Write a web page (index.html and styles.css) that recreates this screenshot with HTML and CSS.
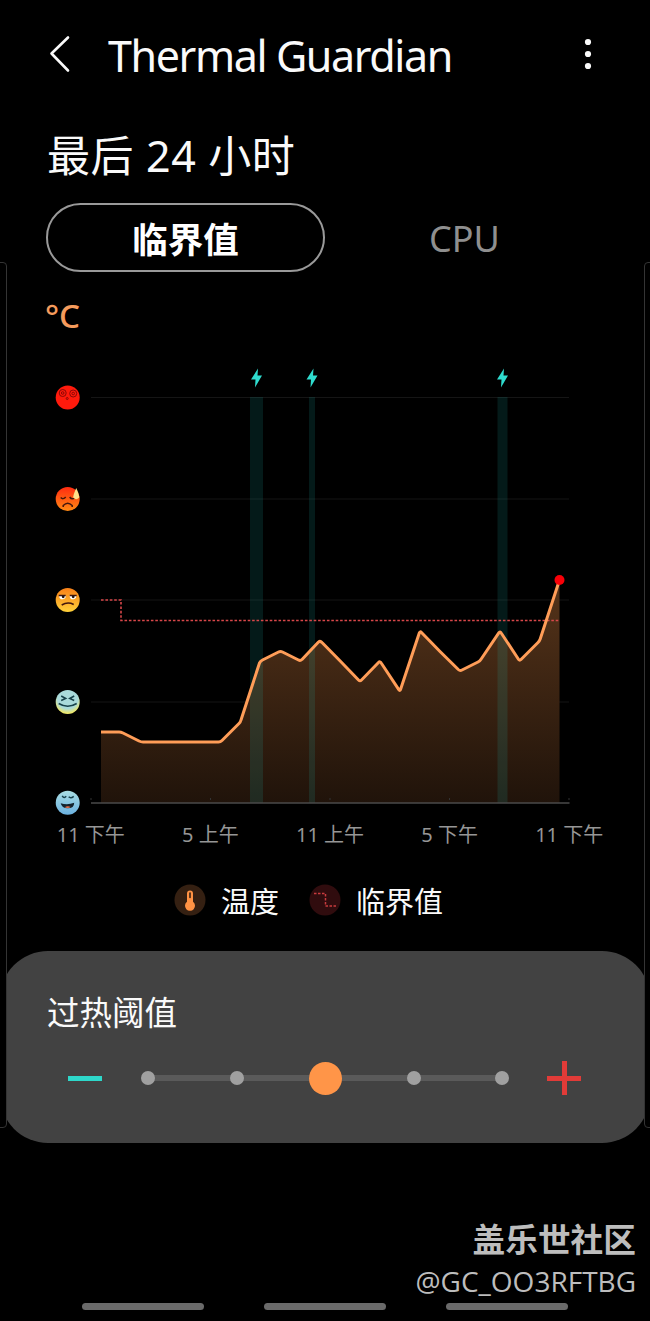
FILE: index.html
```
<!DOCTYPE html>
<html lang="zh-CN">
<head>
  <meta charset="UTF-8">
  <meta name="viewport" content="width=device-width, initial-scale=1.0">
  <title>Thermal Guardian</title>
  <link rel="stylesheet" href="styles.css">
</head>
<body>
  <div class="screen">
    <div class="edge edge-left"></div>
    <div class="edge edge-right"></div>

    <!-- Top bar -->
    <header class="top-bar">
      <svg class="back" width="24" height="40" viewBox="0 0 24 40"><path d="M20 3.500 3.500 19.500 20 36.500"/></svg>
      <h1>Thermal Guardian</h1>
      <svg class="more" width="10" height="34" viewBox="0 0 10 34"><circle cx="5" cy="5" r="3.100"/><circle cx="5" cy="17" r="3.100"/><circle cx="5" cy="29" r="3.100"/></svg>
    </header>

    <h2>最后 24 小时</h2>

    <nav class="tabs">
      <button class="tab active">临界值</button>
      <button class="tab">CPU</button>
    </nav>

    <div class="unit">°C</div>

    <!-- Temperature chart -->
    <svg class="chart" width="650" height="460" viewBox="0 360 650 460">
      <defs>
        <linearGradient id="fill" x1="0" y1="580" x2="0" y2="803" gradientUnits="userSpaceOnUse">
          <stop offset="0" stop-color="#56341a"/>
          <stop offset="1" stop-color="#20130a"/>
        </linearGradient>
        <linearGradient id="hot" x1="0" y1="0" x2="0" y2="1"><stop offset="0" stop-color="#ff2b10"/><stop offset="1" stop-color="#ff8a14"/></linearGradient>
        <linearGradient id="warm" x1="0" y1="0" x2="0" y2="1"><stop offset="0" stop-color="#f98018"/><stop offset="1" stop-color="#ffd13a"/></linearGradient>
        <linearGradient id="cold" x1="0" y1="0" x2="0" y2="1"><stop offset="0" stop-color="#a9dde2"/><stop offset="1" stop-color="#6bb1e0"/></linearGradient>
        <radialGradient id="mild" cx="0.5" cy="0.35" r="0.65"><stop offset="0.65" stop-color="#a9dadb"/><stop offset="0.95" stop-color="#eee86a"/></radialGradient>
        <path id="bolt" d="M1.500-9.500-5.500 1.500H-1L-1.500 9.500 5.500-2.500H1Z"/>
      </defs>

      <g class="grid">
        <path d="M91 397.500H569M91 499H569M91 600H569M91 702H569"/>
      </g>

      <path class="area" d="M101 803V732H121L141 742H220.500L240.500 722 260.500 661 280.500 651 300.300 661 320.200 640.500 340.200 661 360 681.500 380 661 400 691.500 420 631 440 651.500 460 671 480 661 500 631 519.500 661 539.500 641 559.500 580V803Z"/>
      <g class="charging">
        <rect x="250" y="397" width="13" height="406"/>
        <rect x="309" y="397" width="6" height="406"/>
        <rect x="497.500" y="397" width="10" height="406"/>
      </g>
      <path class="axis" d="M91 803H569.500"/>
      <path class="ticks" d="M91 798v2M210.500 798v2M330 798v2M449.500 798v2M569 798v2"/>
      <path class="limit" d="M101 600H121V620.500H559.500"/>
      <path class="line" d="M101 732H119Q121 732 123 733L139 741Q141 742 143 742H218.500Q220.500 742 222 740.500L239 723.500Q240.500 722 241 720L259.500 663Q260.500 661 262.500 660L278.500 652Q280.500 651 282.500 652L298.500 660Q300.300 661 302 659.500L318.500 642Q320.200 640.500 322 642.500L340.200 661 358.500 680Q360 681.500 361.500 680L378.500 662.500Q380 661 381.200 663L398.800 689.700Q400 691.500 400.700 689L419.300 633Q420 631 421.500 632.500L440 651.500 458.300 669.500Q460 671 462 670L478 662Q480 661 481.200 659L498.800 632.800Q500 631 501.200 633L518.300 659Q519.500 661 521 659.500L538 642.500Q539.500 641 540.200 639L559.500 580"/>
      <circle class="now" cx="559.500" cy="580" r="5"/>

      <g class="bolts">
        <use href="#bolt" x="256.500" y="378"/>
        <use href="#bolt" x="312" y="378"/>
        <use href="#bolt" x="502.500" y="378"/>
      </g>

      <!-- Faces, hottest first -->
      <g class="face" transform="translate(67.700 397.500)">
        <circle r="12" fill="#ff1a0c"/>
        <circle class="thin" cx="-5" cy="-4.500" r="3.500"/><circle class="thin" cx="-5" cy="-4.500" r="1.300"/>
        <circle class="thin" cx="5.500" cy="-4" r="3.500"/><circle class="thin" cx="5.500" cy="-4" r="1.300"/>
        <circle class="thin" cx="-.5" cy="1" r="1"/>
      </g>
      <g class="face" transform="translate(67.700 499)">
        <circle r="12" fill="url(#hot)"/>
        <path class="ink" d="M-7-1.500q2.500 2.500 5-.5M2-2q2 3 5 1M-4.500 8V6.500Q0 2 4.500 6.500V8"/>
        <path d="M8.500-11Q5.500-4 5.500-1.500Q8.500 2 11.500-1.500Q11.500-5 8.500-11" fill="#ffe28a"/>
      </g>
      <g class="face" transform="translate(67.700 600)">
        <circle r="12" fill="url(#warm)"/>
        <path d="M-8.500-4.500H-2A3.200 3.200 0 0 1-8.500-3.500ZM2-4.500H8.500A3.200 3.200 0 0 1 2-3.500Z" fill="#fff"/>
        <path class="ink" d="M-9-4.500H-2M2-4.500H9M-6 5Q0 1.500 6 4.500"/>
        <circle cx="-4.500" cy="-3.200" r="1.400" fill="#28170e"/><circle cx="5.500" cy="-3.200" r="1.400" fill="#28170e"/>
      </g>
      <g class="face" transform="translate(67.700 702)">
        <circle r="12" fill="url(#mild)"/>
        <path class="cool" d="M-6.500-6-2-3.500-6.500-1.500M6.500-6 2-3.500 6.500-1.500M-9 1.500Q0 7 9 1.500"/>
      </g>
      <g class="face" transform="translate(67.700 802.800)">
        <circle r="12" fill="url(#cold)"/>
        <path class="cool" d="M-5.500-7q2 3 4 .500M1-6q2 2 5-.5"/>
        <path d="M-7 .500Q0 2.500 6.500 0Q6.500 5.500 0 5.500Q-6 5.500-7 .500" fill="#14232d"/>
        <path d="M-3 4.500Q0 2.500 3 4.300Q0 6-3 4.500" fill="#f1714a"/>
      </g>
    </svg>

    <div class="hours">
      <span>11 下午</span><span>5 上午</span><span>11 上午</span><span>5 下午</span><span>11 下午</span>
    </div>

    <div class="legend">
      <svg width="32" height="32" viewBox="0 0 32 32">
        <circle cx="16" cy="16" r="15.500" fill="#352012"/>
        <path d="M13 9.500a3 3 0 0 1 6 0v8.300a5 5 0 1 1-6 0Z" fill="#ff9244"/>
        <path d="M16 9v4.500" stroke="#352012" stroke-width="1.600" stroke-linecap="round"/>
      </svg>
      <span class="name">温度</span>
      <svg width="32" height="32" viewBox="0 0 32 32">
        <circle cx="16" cy="16" r="15.500" fill="#300c0e"/>
        <path d="M5 9.500H16.500V22H27" fill="none" stroke="#c83b3e" stroke-width="1.500" stroke-dasharray="2.500 1.500"/>
      </svg>
      <span class="name">临界值</span>
    </div>

    <!-- Threshold slider -->
    <section class="panel">
      <h3>过热阈值</h3>
      <div class="slider">
        <button class="minus" aria-label="-"></button>
        <div class="track">
          <i></i><i></i><i class="thumb"></i><i></i><i></i>
        </div>
        <button class="plus" aria-label="+"></button>
      </div>
    </section>

    <footer>
      <p class="community">盖乐世社区</p>
      <p class="user">@GC_OO3RFTBG</p>
      <div class="nav-hints"><b></b><b></b><b></b></div>
    </footer>
  </div>
</body>
</html>
```
FILE: styles.css
```
* {
  box-sizing: border-box;
}

body {
  margin: 0;
  background: #000;
  color: #fafafa;
  font-family: "Noto Sans", "Noto Sans CJK SC", sans-serif;
}

h1, h2, h3, p {
  margin: 0;
  font-weight: 400;
}

button {
  padding: 0;
  border: none;
  background: none;
  font-family: inherit;
}

svg {
  display: block;
  flex: none;
}

.screen {
  position: relative;
  display: flex;
  flex-direction: column;
  width: 650px;
  height: 1321px;
  overflow: hidden;
}

/* Curved display edges, drawn over the panel */
.edge {
  position: absolute;
  z-index: 1;
  top: 262px;
  width: 12px;
  height: 866px;
  border: 1px solid #343434;
  border-radius: 4px;
  background: #000;
}

.edge-left {
  left: -5px;
}

.edge-right {
  right: -6px;
}

/* Top bar */
.top-bar {
  display: flex;
  align-items: center;
  height: 108px;
  padding: 0 57px 0 48px;
}

.back {
  fill: none;
  stroke: #fafafa;
  stroke-width: 2.6;
  stroke-linecap: round;
  stroke-linejoin: round;
}

h1 {
  flex: 1;
  margin-left: 36px;
  padding-top: 3px;
  font-size: 43px;
  letter-spacing: -1.4px;
  line-height: 60px;
  white-space: nowrap;
}

.more {
  fill: #fafafa;
}

h2 {
  height: 95px;
  padding-left: 47px;
  font-size: 43px;
  letter-spacing: 0.6px;
  line-height: 96px;
}

/* Tabs */
.tabs {
  display: grid;
  grid-template-columns: 279px 279px;
  height: 69px;
  padding-left: 46px;
}

.tab {
  padding-top: 3px;
  color: #8f8f8f;
  font-size: 36px;
  line-height: 66px;
}

.tab.active {
  border: 2px solid #999;
  border-radius: 35px;
  color: #fff;
  font-size: 35.5px;
  font-weight: 700;
  line-height: 62px;
}

.unit {
  height: 88px;
  padding-left: 45px;
  color: #f59b5c;
  font-size: 33px;
  font-weight: 500;
  line-height: 88px;
}

/* Chart */
.chart {
  margin-bottom: -1px;
}

.grid path {
  stroke: #151515;
}

.area {
  fill: url(#fill);
}

.charging {
  fill: #25d9cb;
  fill-opacity: 0.12;
}

.axis {
  stroke: #4a4a4a;
  stroke-width: 1.5;
}

.ticks {
  stroke: #333;
}

.limit {
  fill: none;
  stroke: #d8474a;
  stroke-width: 1.6;
  stroke-dasharray: 2.6 1.8;
}

.line {
  fill: none;
  stroke: #ff9d58;
  stroke-width: 3;
  stroke-linejoin: round;
}

.now {
  fill: #f90008;
}

.bolts {
  fill: #2fdccf;
}

.face .ink, .face .thin, .face .cool {
  fill: none;
  stroke: #42170e;
  stroke-width: 1.5;
}

.face .thin {
  stroke: #8a0806;
  stroke-width: 1;
}

.face .cool {
  stroke: #17414a;
}

.hours {
  display: flex;
  padding: 0 21px 0 31px;
  color: #969696;
  font-size: 20px;
  line-height: 32px;
}

.hours span {
  flex: 1;
  text-align: center;
}

.legend {
  display: flex;
  align-items: center;
  height: 100px;
  padding: 0 0 3px 174px;
}

.name {
  margin: 0 30px 0 15px;
  padding-top: 4px;
  font-size: 29px;
  line-height: 40px;
}

/* Threshold panel */
.panel {
  height: 192px;
  padding: 38px 68px 0;
  border-radius: 48px;
  background: #424242;
}

h3 {
  margin-left: -21px;
  font-size: 32.5px;
  line-height: 48px;
}

.slider {
  display: flex;
  align-items: center;
  height: 82px;
}

.minus {
  width: 34px;
  height: 5px;
  background: #2ed8ca;
}

.track {
  display: flex;
  flex: none;
  align-items: center;
  justify-content: space-between;
  width: 368px;
  height: 34px;
  margin: 0 38px 0 39px;
  background: linear-gradient(#5a5a5a, #5a5a5a) center / 354px 6px no-repeat;
}

.track i {
  width: 14px;
  height: 14px;
  border-radius: 50%;
  background: #a0a0a0;
}

.track .thumb {
  width: 33px;
  height: 33px;
  margin: 0 -9.5px;
  background: #ff9548;
}

.plus {
  width: 34px;
  height: 34px;
  background:
    linear-gradient(#e23b38, #e23b38) center / 5px 34px no-repeat,
    linear-gradient(#e23b38, #e23b38) center / 34px 5px no-repeat;
}

/* Signature and navigation hints */
footer {
  padding-top: 76px;
  color: #bdbdbd;
  text-align: right;
}

.community {
  padding-right: 14px;
  font-size: 32.7px;
  font-weight: 700;
  line-height: 42px;
}

.user {
  height: 42px;
  padding-right: 14px;
  font-family: "Open Sans", sans-serif;
  font-size: 28px;
  line-height: 40px;
}

.nav-hints {
  display: flex;
  gap: 60px;
  padding-left: 82px;
}

.nav-hints b {
  width: 122px;
  height: 7px;
  border-radius: 4px;
  background: #6a6a6a;
}
```
